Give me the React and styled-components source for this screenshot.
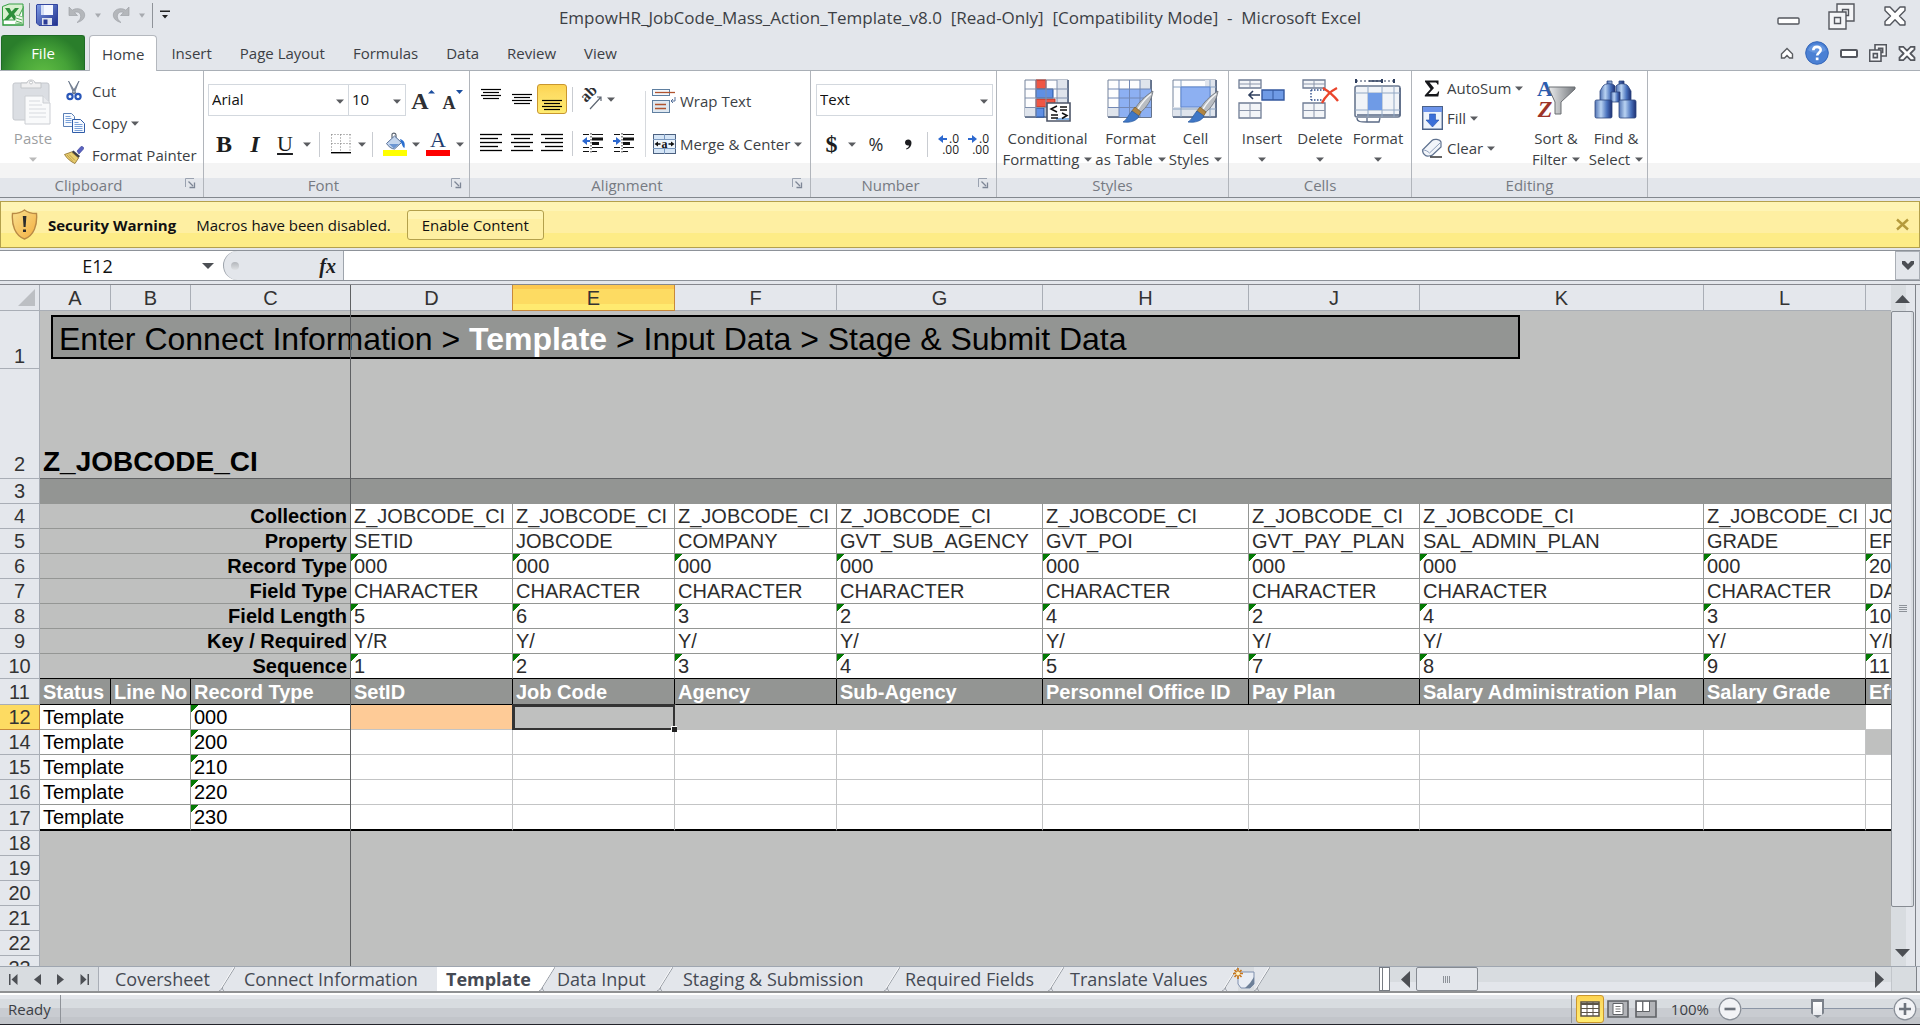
import React from "react";
import styled, { createGlobalStyle, css } from "styled-components";

const UI = '"Open Sans", "Noto Sans", sans-serif';
const SHEET = '"Liberation Sans", Arial, sans-serif';

const Global = createGlobalStyle`
  *, *::before, *::after { box-sizing: border-box; }
  body { margin: 0; background: #e3e6eb; }
  button, input, select { font: inherit; color: inherit; margin: 0; padding: 0; border: 0; background: none; border-radius: 0; }
  svg { display: block; flex: none; }
`;

/* ---------- window shell ---------- */
const Window = styled.div`
  display: flex;
  flex-direction: column;
  height: 100vh;
  overflow: hidden;
  background: #e3e6eb;
  color: #3c3f45;
  font: 15px/20px ${UI};
`;
const TitleBar = styled.header`
  display: grid;
  grid-template-columns: 1fr auto 1fr;
  height: 35px;
`;
const Title = styled.h1`
  margin: 0;
  align-self: center;
  font: 400 17px/30px ${UI};
  white-space: pre;
`;
const QuickAccess = styled.div`
  display: flex;
  align-items: center;
  height: 30px;
`;
const WindowButtons = styled.div`
  display: flex;
  justify-content: flex-end;
  align-items: center;
  height: ${(p) => p.$h || 32}px;
  gap: ${(p) => p.$gap}px;
  padding-right: ${(p) => p.$pad}px;
`;
const IconButton = styled.button`
  display: flex;
  align-items: center;
  justify-content: center;
  flex: none;
  width: ${(p) => (p.$w ? `${p.$w}px` : "auto")};
  height: ${(p) => (p.$h ? `${p.$h}px` : "auto")};
`;
const Divider = styled.span`
  flex: none;
  width: 1px;
  height: ${(p) => p.$h || 25}px;
  margin: 0 ${(p) => p.$m || 0}px;
  background: ${(p) => p.$color || "#c9ccd1"};
`;

/* ---------- ribbon ---------- */
const TabStrip = styled.nav`
  display: flex;
  align-items: stretch;
  height: 36px;
  border-bottom: 1px solid #a9afb6;
`;
const FileTab = styled.button`
  width: 84px;
  margin: 0 4px 0 1px;
  border: 1px solid #1f6b26;
  border-bottom: 0;
  border-radius: 3px 3px 0 0;
  background: radial-gradient(ellipse at 50% 125%, #63bf45 0, #46a338 45%, #2a7e2b 75%);
  color: #fff;
`;
const RibbonTab = styled.button`
  padding: 0 14px;
  ${(p) =>
    p.$active &&
    css`
      margin-bottom: -1px;
      padding: 0 12px;
      border: 1px solid #b4b8be;
      border-bottom: 0;
      border-radius: 4px 4px 0 0;
      background: #fff;
    `}
`;
const Spacer = styled.div`
  flex: 1;
`;
const Ribbon = styled.div`
  display: flex;
  height: 127px;
  border-bottom: 1px solid #83888e;
  background: linear-gradient(#fff 0 92px, #f4f4f4 92px 107px, #e3e6eb 107px);
`;
const Group = styled.section`
  position: relative;
  display: flex;
  flex-direction: column;
  flex: none;
  width: ${(p) => p.$w}px;
  border-right: 1px solid #b1b5bb;
`;
const GroupBody = styled.div`
  display: flex;
  height: 106px;
  padding: ${(p) => p.$pad || "0"};
`;
const GroupLabel = styled.h2`
  display: flex;
  align-items: center;
  justify-content: center;
  margin: 0;
  height: 17px;
  padding-right: ${(p) => (p.$launcher ? 26 : 0)}px;
  font: 400 15px/17px ${UI};
  color: #767a82;
`;
const Launcher = styled.button`
  position: absolute;
  right: 7px;
  bottom: 8px;
`;
const Stack = styled.div`
  display: flex;
  flex-direction: column;
  gap: ${(p) => p.$gap || 0}px;
  padding-top: ${(p) => p.$top || 0}px;
`;
const ToolRow = styled.div`
  display: flex;
  align-items: center;
  height: ${(p) => p.$h || 32}px;
`;
const BigButton = styled.button`
  display: flex;
  flex-direction: column;
  align-items: center;
  flex: none;
  width: ${(p) => p.$w}px;
  padding-top: 8px;
  line-height: 21px;
  white-space: nowrap;
  opacity: ${(p) => (p.$off ? 0.5 : 1)};
`;
const BigIcon = styled.span`
  height: 49px;
  flex: none;
`;
const LabelLine = styled.span`
  display: flex;
  align-items: center;
  justify-content: center;
  height: 21px;
  gap: 5px;
`;
const SmallButton = styled.button`
  display: flex;
  align-items: center;
  gap: 4px;
  height: ${(p) => p.$h || 32}px;
  white-space: nowrap;
`;
const IconSlot = styled.span`
  display: flex;
  justify-content: center;
  flex: none;
  width: ${(p) => p.$w || 21}px;
`;
const Toggle = styled(IconButton)`
  border: 1px solid #c9962f;
  border-radius: 3px;
  background: linear-gradient(#fcd34f, #fddc63 30%, #ffec70);
`;
const Combo = styled.span`
  position: relative;
  display: flex;
  align-items: center;
  width: ${(p) => p.$w}px;
  height: 32px;
  border: 1px solid #d3d8de;
  background: #fff;
  color: #111;
  & + & { margin-left: -1px; }
  & > svg { position: absolute; right: 4px; top: 14px; pointer-events: none; }
`;
const ComboSelect = styled.select`
  appearance: none;
  width: 100%;
  height: 30px;
  padding: 0 18px 3px 3px;
`;
const Glyph = styled.span`
  font: ${(p) => p.$style || "normal"} ${(p) => p.$weight || 700} ${(p) => p.$size || 22}px/28px "Liberation Serif", serif;
  color: #1c1d20;
  text-decoration: ${(p) => (p.$under ? "underline" : "none")};
`;
const Percent = styled.span`
  font: 400 18px/28px ${UI};
  color: #2a2c30;
`;

/* ---------- security bar ---------- */
const SecurityBar = styled.div`
  display: flex;
  align-items: center;
  height: 47px;
  margin-top: 3px;
  padding: 0 10px;
  border: 1px solid #b3a04c;
  background: linear-gradient(#fef4b4 0 9px, #feefa2 9px 31px, #fdec86 31px);
  color: #111;
`;
const Warn = styled.strong`
  margin: 0 20px 0 10px;
`;
const EnableButton = styled.button`
  height: 30px;
  width: 137px;
  margin-left: 16px;
  border: 1px solid #b3a04c;
  border-radius: 3px;
  background: linear-gradient(#fef4b4 0 8px, #feefa2 8px);
`;

/* ---------- formula bar ---------- */
const FormulaBar = styled.div`
  display: flex;
  height: 31px;
  margin-top: 2px;
  border: solid #8d9299;
  border-width: 1px 0;
  background: #fff;
`;
const NameBox = styled.input`
  width: 195px;
  text-align: center;
  font-size: 18px;
  color: #111;
`;
const FxArea = styled.div`
  display: flex;
  align-items: center;
  justify-content: space-between;
  width: 121px;
  margin-left: 3px;
  padding: 0 7px;
  border: solid #9ea4ac;
  border-width: 0 1px 0 1px;
  border-radius: 15px 0 0 15px;
  background: #e3e6eb;
`;
const Dot = styled.span`
  width: 8px;
  height: 8px;
  border-radius: 50%;
  background: linear-gradient(#b3b6bb, #dfe1e4);
`;
const FormulaInput = styled.input`
  flex: 1;
  min-width: 0;
  background: #fff;
`;
const ExpandButton = styled(IconButton)`
  border: 1px solid #a9aeb5;
  background: #e3e6eb;
`;

/* ---------- sheet ---------- */
const Main = styled.main`
  display: flex;
  flex: 1;
  min-height: 0;
  margin-top: 3px;
  border-top: 1px solid #85878d;
`;
const Viewport = styled.div`
  position: relative;
  flex: 1;
  min-width: 0;
  overflow: hidden;
  background: #bfc0bf;
`;
const Grid = styled.table`
  table-layout: fixed;
  width: 2028px;
  border-collapse: separate;
  border-spacing: 0;
  font: 20px/24px ${SHEET};
  color: #2d2d2d;
`;
const headFace = css`
  background: #e4e7ec;
  border: solid #a9aeb6;
  border-width: 0 1px 1px 0;
  font-weight: 400;
  padding: 0;
  color: #333;
`;
const hotFace = css`
  border-color: #c8893a;
  box-shadow: -1px 0 0 #c8893a;
`;
const ColHead = styled.th`
  ${headFace}
  height: 26px;
  ${(p) =>
    p.$hot &&
    css`
      ${hotFace}
      background: linear-gradient(#fcc850 0 4px, #fddb62 4px 19px, #ffea70 19px);
    `}
`;
const Corner = styled.th`
  ${headFace}
  & > svg { margin: 0 4px 0 auto; }
`;
const RowHead = styled.th`
  ${headFace}
  height: ${(p) => p.$h || 25}px;
  padding-bottom: ${(p) => p.$lift || 0}px;
  vertical-align: bottom;
  ${(p) => p.$hot && css`background: #fddb62; border-color: #c8893a;`}
`;
const Cell = styled.td`
  position: relative;
  padding: 0 3px;
  overflow: hidden;
  white-space: nowrap;
  text-align: left;
  vertical-align: bottom;
  background-color: ${(p) => p.$bg || "#fff"};
  border: 0 solid ${(p) => p.$line || "#949694"};
  border-right-width: ${(p) => (p.$noRight ? 0 : 1)}px;
  border-bottom-width: ${(p) => (p.$noBottom ? 0 : 1)}px;
  ${(p) =>
    p.$flag && css`background-image: linear-gradient(135deg, #047a04 0 5px, transparent 5px);`}
  ${(p) => p.$blackBottom && css`border-bottom-color: #000;`}
  ${(p) => p.$thick && css`border-bottom: 2px solid #000;`}
`;
const LabelCell = styled(Cell)`
  text-align: right;
  font-weight: 700;
  color: #000;
`;
const HeadingCell = styled(Cell)`
  font-weight: 700;
  color: #fff;
`;
const DarkCell = styled(Cell)`
  color: #000;
`;
const NameCell = styled(Cell)`
  font-size: 28px;
  line-height: 32px;
  font-weight: 700;
  color: #000;
`;
const SelectedCell = styled(Cell)`
  overflow: visible;
  outline: 3px solid #333;
  outline-offset: -2px;
  &::after {
    content: "";
    position: absolute;
    z-index: 1;
    right: -3px;
    bottom: -3px;
    width: 6px;
    height: 6px;
    border: solid #fff;
    border-width: 1px 0 0 1px;
    background: #222;
  }
`;
const Banner = styled.div`
  position: absolute;
  left: 51px;
  top: 30px;
  width: 1469px;
  height: 44px;
  padding-left: 6px;
  border: 2px solid #000;
  background: #939593;
  font: 32px/44px ${SHEET};
  color: #000;
  white-space: nowrap;
  & b { color: #fff; }
`;
const FreezeLine = styled.div`
  position: absolute;
  left: 350px;
  top: 0;
  bottom: 0;
  width: 1px;
  background: #5f6163;
`;
const VScroll = styled.div`
  display: flex;
  flex-direction: column;
  width: 29px;
  padding-right: 4px;
  border-right: 2px solid #e3e6eb;
  background: linear-gradient(90deg, #d8dce0 0 15px, #e3e6eb 15px 24px, #7f8389 24px 25px, #e3e6eb 25px);
`;
const VThumb = styled.div`
  flex: 1;
  display: flex;
  align-items: center;
  justify-content: center;
  margin-bottom: 33px;
  border: 1px solid #868b92;
  border-radius: 2px;
  background: linear-gradient(90deg, #e3e6eb 0 19px, #d8dce0 19px);
`;

/* ---------- bottom strips ---------- */
const SheetBar = styled.div`
  display: flex;
  align-items: stretch;
  height: 27px;
  border-top: 1px solid #9fa6b0;
  border-bottom: 2px solid #8f9193;
  background: #d8dce0;
  font-size: 18px;
  line-height: 22px;
  color: #454a54;
`;
const NavButtons = styled.div`
  display: flex;
  align-items: center;
  width: 99px;
  padding-left: 2px;
  border-right: 1px solid #a9aeb6;
`;
const SheetTab = styled.button`
  flex: none;
  width: ${(p) => p.$w}px;
  background: ${(p) => (p.$active ? "#fff" : "#e3e6eb")};
  font-weight: ${(p) => (p.$active ? 700 : 400)};
  white-space: nowrap;
  text-align: left;
  padding-left: ${(p) => p.$pl}px;
`;
const NewSheetTab = styled.button`
  position: relative;
  z-index: 1;
  display: flex;
  flex: none;
  align-items: center;
  justify-content: center;
  width: 22px;
  margin: 0 -1px 0 -5px;
`;
const HScroll = styled.div`
  display: flex;
  align-items: center;
  flex: none;
  width: 512px;
  background: linear-gradient(#d8dce0 0 15px, #e3e6eb 15px);
`;
const HThumb = styled.div`
  display: flex;
  align-items: center;
  justify-content: center;
  width: 62px;
  height: 24px;
  margin-right: auto;
  border: 1px solid #868b92;
  border-radius: 2px;
  background: #e3e6eb;
`;
const SplitHandle = styled.div`
  width: 11px;
  height: 24px;
  margin-right: 4px;
  border: 1px solid #777c83;
  background: linear-gradient(90deg, #fff 0 2px, #777c83 2px 3px, #fff 3px);
`;
const ScrollCorner = styled.div`
  width: 29px;
  border-left: 1px solid #c2c6cb;
  background: linear-gradient(90deg, #d8dce0 0 24px, #7f8389 24px 25px, #e3e6eb 25px);
`;
const StatusBar = styled.footer`
  display: flex;
  align-items: center;
  height: 32px;
  padding: 0 3px 2px 8px;
  border-top: 2px solid #fff;
  border-bottom: 1px solid #23242a;
  background: linear-gradient(#e3e6eb 0 4px, #d8dce0 4px 13px, #c9ccd1 13px 22px, #c2c5ca 22px);
`;
const ZoomLabel = styled.label`
  margin: 0 9px 0 8px;
`;
const ZoomRange = styled.input`
  appearance: none;
  width: 151px;
  height: 20px;
  background: linear-gradient(#8b95a5, #8b95a5) center / 100% 1px no-repeat;
  &::-webkit-slider-thumb {
    appearance: none;
    width: 13px;
    height: 19px;
    background: linear-gradient(#fff, #e8eaee) center / 9px 13px no-repeat #7c828b;
    clip-path: polygon(0 0, 100% 0, 100% 75%, 50% 100%, 0 75%);
  }
`;
const ViewToggle = styled(Toggle)`
  margin-right: 3px;
`;

/* ---------- icons ---------- */
const Caret = ({ c = "#5a5c60", w = 8 }) => (
  <svg width={w} height="5" viewBox="0 0 8 5" preserveAspectRatio="none"><path d="M0 0.5h8L4 4.8z" fill={c} /></svg>
);
const ExcelIcon = () => (
  <svg width="24" height="24" viewBox="0 0 24 24">
    <path d="M4 4h18v18H2V6z" fill="#fff" stroke="#2c9a3c" strokeWidth="1.4" />
    <path d="M1.5 3.5 8 1h14v4l-6 12H1.5z" fill="#d9f0d0" stroke="#38a046" />
    <path d="M4 5h4.500l2 3.500L14 5h4l-5 6 4.500 6H13l-2.500-3.500L7 17H3l5-6z" fill="#2d8f3a" />
    <path d="M15 12l7 2v7l-8-1" fill="#eef7ea" stroke="#7bc07f" />
    <path d="M15 15l6 2M15 18l6 2" stroke="#57ad5d" />
  </svg>
);
const SaveIcon = () => (
  <svg width="22" height="22" viewBox="0 0 22 22">
    <defs><linearGradient id="sv" x1="0" y1="0" x2="1" y2="1"><stop offset="0" stopColor="#7f9de6" /><stop offset="1" stopColor="#1f2f8c" /></linearGradient></defs>
    <path d="M1 .5h20.500v21H3L.5 19V1z" fill="url(#sv)" stroke="#3346a0" />
    <path d="M5 1h12v10H5z" fill="#f3f6ff" /><path d="M5 1h3v10H5z" fill="#d2dcf5" />
    <path d="M6 14h10v7H6z" fill="#dfe3ee" /><path d="M7.500 15.500h4v5h-4z" fill="#2a3a96" />
  </svg>
);
const Undo = ({ flip }) => (
  <svg width="18" height="18" viewBox="0 0 18 18">
    <g transform={flip ? "translate(18 0) scale(-1 1)" : undefined}>
      <path d="M1 1v8.500h8.500L6.500 6.600c3-1.600 6.200.2 6.200 3.700 0 2.400-1.200 4.300-3.700 6.200 4.800-1.200 7.700-3.900 7.700-7.500C16.700 3.600 9.500.7 4.200 4.200z" fill="#b4b7bb" stroke="#9fa2a7" strokeWidth=".7" />
    </g>
  </svg>
);
const QatMore = () => (
  <svg width="10" height="10" viewBox="0 0 10 10"><path d="M0 .5h10v1.500H0zM2 5h6L5 8.500z" fill="#222" /></svg>
);
const MinIcon = ({ w = 22, h = 7, s = 1.4 }) => (
  <svg width={w} height={h + 12} viewBox={`0 0 ${w} ${h + 12}`}><rect x="1" y="11" width={w - 2} height={h - 1} rx="1" fill="#fff" stroke="#54575e" strokeWidth={s} /></svg>
);
const SmallMinIcon = () => (
  <svg width="18" height="9" viewBox="0 0 18 9"><rect x="1" y="1" width="16" height="7" rx="1" fill="#fff" stroke="#54575e" strokeWidth="2" /></svg>
);
const RestoreIcon = ({ size = 27, s = 1.4 }) => (
  <svg width={size} height={size} viewBox="0 0 27 27">
    <g fill="#f4f5f7" stroke="#54575e" strokeWidth={s}>
      <path d="M9 1h17v17H9z" /><path d="M14.500 6.500h6v6h-6z" /><path d="M1 9h17v17H1z" /><path d="M6.500 14.500h6v6h-6z" />
    </g>
  </svg>
);
const CloseIcon = ({ w = 24, s = 1.4 }) => (
  <svg width={w} height={Math.round((w * 20) / 24)} viewBox="0 0 24 20">
    <path d="M2 1h5l5 5.200L17 1h5v3.500L16.500 10l5.500 5.500V19h-5l-5-5.200L7 19H2v-3.500L7.500 10 2 4.500z" fill="#fff" stroke="#54575e" strokeWidth={s} strokeLinejoin="round" />
  </svg>
);
const RibbonChevron = () => (
  <svg width="14" height="13" viewBox="0 0 14 13"><path d="M1.500 7 7 1.500 12.500 7v4h-3L7 8.500 4.500 11h-3z" fill="#fff" stroke="#5a5c60" strokeWidth="1.400" /></svg>
);
const HelpIcon = () => (
  <svg width="24" height="24" viewBox="0 0 24 24">
    <circle cx="12" cy="12" r="11.300" fill="#4a80d4" stroke="#3365b8" />
    <path d="M3 9a9.500 8 0 0 1 18 0c-5 4-13 4-18 0z" fill="#76a3e6" opacity=".6" />
    <path d="M8.300 9.200C8.300 4.800 15.700 4.800 15.700 9c0 2.600-3.500 2.800-3.500 5.600" fill="none" stroke="#fff" strokeWidth="2.600" /><path d="M10.800 16.500h2.700v2.700h-2.700z" fill="#fff" />
  </svg>
);
const LauncherIcon = () => (
  <svg width="11" height="11" viewBox="0 0 11 11"><path d="M.5 9V.5H9" fill="none" stroke="#9aa2b0" /><path d="M3.500 3.500 8 8M9.500 4.500v5h-5" fill="none" stroke="#7d8696" strokeWidth="1.300" /></svg>
);
const PasteIcon = () => (
  <svg width="42" height="46" viewBox="0 0 42 46">
    <rect x="1" y="4" width="36" height="37" rx="2" fill="#b9bfc8" stroke="#8b929c" />
    <path d="M9 9V4h6c0-4 8-4 8 0h6v5z" fill="#e2e3e5" stroke="#888d94" /><circle cx="19" cy="3.500" r="1.500" fill="#fff" stroke="#888d94" />
    <path d="M13 17h18l7 7v21H13z" fill="#f4f6f9" stroke="#9aa0a9" /><path d="M31 17v7h7" fill="#d5d9df" stroke="#9aa0a9" />
    <path d="M17 22h11M17 26h13M17 30h17M17 34h17M17 38h17" stroke="#b2b8c1" />
  </svg>
);
const CutIcon = () => (
  <svg width="16" height="20" viewBox="0 0 16 20">
    <path d="M2.500 0 10 12l-2 1zM13 0 6 12l2 1z" fill="#8d97a8" stroke="#4c5a72" strokeWidth=".6" />
    <circle cx="4" cy="15.500" r="2.600" fill="none" stroke="#2a57b8" strokeWidth="2.200" /><circle cx="12" cy="15.500" r="2.600" fill="none" stroke="#2a57b8" strokeWidth="2.200" />
  </svg>
);
const CopyIcon = () => (
  <svg width="22" height="20" viewBox="0 0 22 20">
    <g fill="#f7faff" stroke="#5b7fb5"><path d="M.5.500h8l3 3v10H.5z" /><path d="M9.500 6.500h8l4 4v9h-12z" stroke="#2f5ca8" /></g>
    <path d="M2.500 3.500h5M2.500 5.500h6M2.500 7.500h6M2.500 9.500h6M11.500 9.500h4M11.500 11.500h8M11.500 13.500h8M11.500 15.500h8M11.500 17.500h8" stroke="#6a95d4" strokeWidth=".9" />
  </svg>
);
const BrushIcon = () => (
  <svg width="20" height="18" viewBox="0 0 20 18">
    <path d="M13 5 17 .5c2-.5 3 1 2.500 2.500L15 8z" fill="#5a62c0" stroke="#3c4397" strokeWidth=".6" />
    <path d="M9.500 4.500 16 10l-1.500 2L7.500 6z" fill="#3f4046" />
    <path d="M7.500 6 14.500 12 11 17.500C7 16 3 12.500.5 8.500z" fill="#e9cf72" stroke="#8a6a23" strokeWidth=".8" /><path d="M3 9l6 6.500M5 8.500l6 6" stroke="#b8933a" strokeWidth=".8" />
  </svg>
);
const BordersIcon = () => (
  <svg width="20" height="20" viewBox="0 0 20 20">
    <path d="M.5.500h19M.5 9.500h19M.5 .5v17M9.500.500v17M19 .5v17" stroke="#777" strokeDasharray="1 2" fill="none" /><path d="M0 18.700h20" stroke="#000" strokeWidth="1.400" />
  </svg>
);
const FillIcon = () => (
  <svg width="24" height="24" viewBox="0 0 24 24">
    <path d="M9 6V2.500C9 .5 13 .5 13 3v4" fill="none" stroke="#5b6470" strokeWidth="1.200" />
    <path d="M3.500 11.500 11.500 4l7 6.500-7 6.500c-3 0-6-2.500-8-5.500z" fill="#c3d5ee" stroke="#566f96" />
    <path d="M6 12h10l-5 4.500z" fill="#6b95d2" /><path d="M17 7c4 1 5.500 4 4.500 9-2-.5-2-3-3.500-5.500z" fill="#2a6fd0" />
    <path d="M0 18h24v6H0z" fill="#ff0" />
  </svg>
);
const FontColorIcon = () => (
  <svg width="24" height="24" viewBox="0 0 24 24">
    <text x="12" y="15" textAnchor="middle" fontFamily="Liberation Serif, serif" fontSize="22" fill="#1f3d70">A</text><path d="M0 18h24v6H0z" fill="#fe0000" />
  </svg>
);
const FontSizeIcon = ({ up }) => (
  <svg width="24" height="24" viewBox="0 0 24 24">
    <text x="9" y="21" textAnchor="middle" fontFamily="Liberation Serif, serif" fontWeight="700" fontSize={up ? 24 : 18} fill="#2e3034">A</text>
    <path d={up ? "M17 5.500h7L20.500 2z" : "M16 2h7l-3.500 4z"} fill="#1c4fa0" />
  </svg>
);
const Lines = ({ rows }) => (
  <svg width="22" height="20" viewBox="0 0 22 20">
    {rows.map(([x, w], i) => (<path key={i} d={`M${x} ${i * 4 + 1.5}h${w}`} stroke="#000" strokeWidth="1.300" />))}
  </svg>
);
const VLines = ({ top }) => (
  <svg width="20" height="26" viewBox="0 0 20 26">
    {[[0, 20], [2, 16], [0, 20], [2, 16]].map(([x, w], i) => (<path key={i} d={`M${x} ${top + i * 3 + 0.5}h${w}`} stroke="#000" strokeWidth="1.200" />))}
  </svg>
);
const full = [0, 22];
const OrientIcon = () => (
  <svg width="22" height="22" viewBox="0 0 22 22">
    <text x="0" y="0" transform="translate(5 15) rotate(-45)" fontFamily="Liberation Serif, serif" fontWeight="700" fontSize="16" fill="#2e3034">ab</text>
    <path d="M9 21 20 9M16 9h4v4" fill="none" stroke="#5f6773" strokeWidth="1.200" />
  </svg>
);
const IndentIcon = ({ flip }) => (
  <svg width="22" height="20" viewBox="0 0 22 20">
    <path d="M1 1.500h6M10 1.500h11M1 14.500h6M10 14.500h11M1 18.500h6M10 18.500h5" stroke="#111" strokeWidth="1.200" />
    <path d="M9 0v20" stroke="#222" strokeDasharray="1.500 1.500" /><path d="M10 4.500h11v3H10zM10 9h7v3h-7z" fill="#111" />
    <path d={flip ? "M0 7h3V4l5 4-5 4V9H0z" : "M8 7H5V4L0 8l5 4V9h3z"} fill="#2c68cf" />
  </svg>
);
const WrapIcon = () => (
  <svg width="24" height="24" viewBox="0 0 24 24">
    <rect x=".5" y=".5" width="17" height="6" fill="#f4f8fc" stroke="#5f7fa0" /><path d="M3 3.500h20" stroke="#b0532e" strokeWidth="1.300" />
    <rect x=".5" y="11.500" width="17" height="12" fill="#dfe8f1" stroke="#5f7fa0" /><path d="M3 15.500h11M3 19.500h11" stroke="#b0532e" strokeWidth="1.300" />
    <path d="M23 8v4h-4M21 10l-2 2 2 2" fill="none" stroke="#54709a" />
  </svg>
);
const MergeIcon = () => (
  <svg width="23" height="20" viewBox="0 0 23 20">
    <rect x=".5" y=".5" width="22" height="19" fill="#d5e5f6" stroke="#4c6180" /><path d="M0 5.500h23M0 14.500h23M11.500 0v5M11.500 15v5" stroke="#7a98bf" />
    <path d="M1 6h21v8H1z" fill="#eef5fc" /><path d="M1.500 10 5 7.500V9.300h2.500v1.400H5v1.800zM21.500 10 18 7.500v1.800h-2.500v1.400H18v1.800z" fill="#111" />
    <text x="11.500" y="13.500" textAnchor="middle" fontFamily="Liberation Serif, serif" fontWeight="700" fontSize="12" fill="#111">a</text>
  </svg>
);
const CommaIcon = () => (
  <svg width="9" height="11" viewBox="0 0 9 11"><path d="M1 3.500C1 1.500 2.500.500 4.200.500 6.300.500 7.500 2 7.500 4c0 3-1.800 5.300-5 6.500l-.4-.9C4 8.700 4.900 7.700 5 6.400 3 7 1 5.800 1 3.500z" fill="#1c1d20" /></svg>
);
const DecimalIcon = ({ right }) => (
  <svg width="22" height="22" viewBox="0 0 22 22">
    <path d={right ? "M0 5h4V2l5 4-5 4V7H0z" : "M9 5H5V2L0 6l5 4V7h4z"} fill="#2c68cf" />
    <text x="21" y="10" textAnchor="end" fontFamily="Open Sans, sans-serif" fontSize="12" fill="#222">.0</text>
    <text x="21" y="21" textAnchor="end" fontFamily="Open Sans, sans-serif" fontSize="12" fill="#222">.00</text>
  </svg>
);
const Brush = () => (
  <g>
    <path d="M46 12c-8 5-15 12-18 18l5 4c6-5 12-13 13-22z" fill="#b9bdc2" stroke="#6b7076" strokeWidth=".8" /><path d="M44 15c-5 4-10 10-13 15" stroke="#f4f5f6" strokeWidth="1.500" fill="none" />
    <path d="M28 28l6 5-3 5-7-5z" fill="#b08543" stroke="#7a5a24" strokeWidth=".7" /><path d="M25 32l7 5c-2 5-9 7-16 6 4-2 5-7 9-11z" fill="#3f77c6" stroke="#2a5a9f" strokeWidth=".7" />
  </g>
);
const GridBase = () => (
  <g><path d="M1 1h43v37H1z" fill="#fdfdfe" stroke="#75839b" /><path d="M33 1h11v37H1V28h32z" fill="#dfe4ec" /><path d="M1 38h43V1" fill="none" stroke="#4f5f7c" strokeWidth="1.600" /></g>
);
const CondIcon = () => (
  <svg width="48" height="44" viewBox="0 0 48 44">
    <GridBase /><path d="M12 1h10v9H12zM12 20h19v8H12z" fill="#ef5644" stroke="#b53323" /><path d="M12 10h17v9H12zM12 29h8v9h-8z" fill="#5f8fe4" stroke="#23509c" />
    <path d="M1 10h43M1 19h43M1 28.500h43M12 1v37M22 1v37M33 1v37" stroke="#8090ad" fill="none" />
    <path d="M23 24h23v18H23z" fill="#fff" stroke="#4d5668" strokeWidth="1.600" /><path d="M32 39h13v2H32z" fill="#87b5e8" />
    <path d="M33 27l-6 3 6 3M27 36h7M27 39h7M36 28h7M36 31h7M38 34l5 2.500-5 3" fill="none" stroke="#111" strokeWidth="1.500" />
  </svg>
);
const TableIcon = () => (
  <svg width="48" height="44" viewBox="0 0 48 44">
    <GridBase /><path d="M12 10h32v28H12z" fill="#8db0f2" /><path d="M1 10h43M1 19h43M1 28.500h43M12 1v37M22.500 1v37M33 1v37" stroke="#7388b4" fill="none" /><Brush />
  </svg>
);
const CellStyleIcon = () => (
  <svg width="48" height="44" viewBox="0 0 48 44">
    <GridBase /><path d="M1 8h43M1 30h43M9 1v37M38 1v37" stroke="#8aa3c2" fill="none" /><path d="M9 8h29v20H9z" fill="#8db0f2" stroke="#5f86cf" /><Brush />
  </svg>
);
const MiniGrid = ({ y, h }) => (
  <g><path d={`M1 ${y}h22v${h}H1z`} fill="#f3f5f8" stroke="#6f7c94" strokeWidth="1.300" /><path d={`M12 ${y}v${h}M1 ${y + h / 2}h22`} stroke="#8a95aa" /></g>
);
const InsertIcon = () => (
  <svg width="48" height="44" viewBox="0 0 48 44">
    <MiniGrid y={1} h={8} /><MiniGrid y={24} h={15} /><path d="M24 11h22v10H24z" fill="#6f9be6" stroke="#34589f" strokeWidth="1.400" /><path d="M35 11v10" stroke="#34589f" />
    <path d="M22 16H11M15 12l-4 4 4 4" fill="none" stroke="#2f3f5e" strokeWidth="1.600" />
  </svg>
);
const DeleteIcon = () => (
  <svg width="48" height="44" viewBox="0 0 48 44">
    <g transform="translate(6 0)"><MiniGrid y={1} h={8} /><MiniGrid y={24} h={15} /><path d="M9 11h14M9 21h14M9 11v10" fill="none" stroke="#2f4d8c" strokeWidth="1.400" strokeDasharray="1.500 1.500" />
      <path d="M21 9c5 3 11 8 15 13M35 9c-6 3-12 9-15 15" fill="none" stroke="#ea452c" strokeWidth="2.400" /></g>
  </svg>
);
const FormatIcon = () => (
  <svg width="48" height="46" viewBox="0 0 48 46">
    <path d="M2 0v4M40 0v4M28 0v4" stroke="#2f3f5e" strokeWidth="2" /><path d="M2 2h38" stroke="#2f3f5e" strokeDasharray="2 2" /><path d="M15 2h12" stroke="#2f3f5e" strokeWidth="1.500" />
    <rect x="1" y="7" width="45" height="31" rx="2" fill="#f1f4f8" stroke="#6a7890" strokeWidth="1.600" /><path d="M3 36h43V9" fill="none" stroke="#5a6a85" strokeWidth="1.500" />
    <path d="M1 14h45M1 31h45M14 7v31M28 7v31M40 7v31" stroke="#92a8c4" /><path d="M14 14h14v17H14z" fill="#6f9be6" />
    <path d="M3 39c0 4 4 4 10 4M13 39v4h12l1-4" fill="none" stroke="#5a6a85" strokeWidth="1.300" />
  </svg>
);
const SigmaIcon = () => (
  <svg width="16" height="17" viewBox="0 0 16 17"><path d="M1 .5h13.500v4h-1.200c-.3-1.500-.8-2-2.300-2H5.500l4.500 5.500-5.500 6h7c1.500 0 2-.7 2.500-2.500h1.200l-.9 5H.8v-1.200L6.500 9 1 1.700z" fill="#15161a" /></svg>
);
const FillDownIcon = () => (
  <svg width="21" height="24" viewBox="0 0 21 24">
    <path d="M.7.700h19.600v22.600H.7z" fill="#eef4fc" stroke="#4b6288" strokeWidth="1.400" /><path d="M1 1h19v5H1z" fill="#6d94ea" />
    <path d="M7.500 8h6v6h3.500l-6.500 7-6.500-7h3.500z" fill="#3a6fd8" stroke="#2753a8" strokeWidth=".6" />
  </svg>
);
const EraserIcon = () => (
  <svg width="22" height="20" viewBox="0 0 22 20">
    <path d="M1.500 12 11 2.500c2-2 8-1.500 9 1.500v5L11.500 17c-1 1-6 1.500-7 .5-1.500-1-3-3-3-5.500z" fill="#f2f5fa" stroke="#5f728f" strokeWidth="1.200" /><path d="M1.500 12c3 0 5 1 7 3L19 5" fill="none" stroke="#8fa0bb" /><path d="M9 19h12" stroke="#111" strokeWidth="1.300" />
  </svg>
);
const SortIcon = () => (
  <svg width="40" height="42" viewBox="0 0 40 42">
    <defs><linearGradient id="fn"><stop offset="0" stopColor="#e9eaeb" /><stop offset="1" stopColor="#75797e" /></linearGradient></defs>
    <text x="9" y="17" textAnchor="middle" fontFamily="Liberation Serif, serif" fontWeight="700" fontSize="22" fill="#2b5cae">A</text>
    <text x="9" y="38" textAnchor="middle" fontFamily="Liberation Serif, serif" fontStyle="italic" fontWeight="700" fontSize="24" fill="#9c3328">Z</text>
    <path d="M13 8h26v2L25 23v12h-6V23L13 10z" fill="url(#fn)" stroke="#6b6e73" />
  </svg>
);
const FindIcon = () => (
  <svg width="44" height="42" viewBox="0 0 44 42">
    <defs><linearGradient id="bn"><stop offset="0" stopColor="#5173b4" /><stop offset=".35" stopColor="#b9d3f2" /><stop offset=".7" stopColor="#4a72bd" /><stop offset="1" stopColor="#1d2f72" /></linearGradient></defs>
    <g fill="url(#bn)" stroke="#2e477f" strokeWidth=".8">
      <path d="M13 2h5v5h-5zM25 2h5v5h-5z" /><path d="M9 7c2-3 10-3 12 0v15H6V12z" /><path d="M22 7c2-3 10-3 12 0l3 5v10H22z" />
      <path d="M17 13h9v10h-9z" /><rect x="1" y="21" width="17" height="18" rx="1.500" /><rect x="25" y="21" width="17" height="18" rx="1.500" />
    </g>
  </svg>
);
const ShieldIcon = () => (
  <svg width="27" height="31" viewBox="0 0 27 31">
    <defs><linearGradient id="sh" x1="0" x2="1" y1="0" y2="1"><stop offset="0" stopColor="#f9e08e" /><stop offset="1" stopColor="#f3ae3f" /></linearGradient></defs>
    <path d="M13.500 1c3 2.500 8 3.500 12 3.500C26.500 16 23 26.500 13.500 30 4 26.500.5 16 1.500 4.500 5.500 4.500 10.500 3.500 13.500 1z" fill="url(#sh)" stroke="#b98a45" strokeWidth="1.400" />
    <path d="M11.800 7h3.600l-.8 11h-2zM12 20.500h3V23h-3z" fill="#2b2b2b" />
  </svg>
);
const SmallX = () => (
  <svg width="13" height="13" viewBox="0 0 13 13"><path d="M1 1.500l11 10M12 1.500l-11 10" stroke="#b59a3c" strokeWidth="2.400" /></svg>
);
const Tri = ({ d, w = 15, h = 9 }) => (
  <svg width={w} height={h} viewBox={`0 0 ${w} ${h}`}><path d={d} fill="#4c4f54" /></svg>
);
const CornerTri = () => (
  <svg width="17" height="17" viewBox="0 0 17 17"><path d="M17 0v17H0z" fill="#bcbfc3" /></svg>
);
const TabEdge = ({ left = "#e3e6eb", right = "#e3e6eb" }) => (
  <svg width="16" height="24" viewBox="0 0 16 24">
    <path d="M0 0h16v24H0z" fill={right} /><path d="M0 0h16L2.500 21 0 24z" fill={left} />
    <path d="M16 0 3.500 20c-1 2-2 4-3.500 4M3.500 20c-.3 2 .5 3 1.500 4" fill="none" stroke="#9398a0" /><path d="M15 0 2 21" stroke="#fff" strokeWidth=".8" />
  </svg>
);
const NewSheetIcon = () => (
  <svg width="22" height="22" viewBox="0 0 22 22">
    <path d="M5 4h16v12l-4 4H8l-3-4z" fill="#e9edf4" stroke="#7f8fae" /><path d="M21 9v7l-4 4h-5l5-5z" fill="#6d8098" />
    <path d="M5 0v11M0 5.500h10M1.500 2l7 7M8.500 2l-7 7" stroke="#c9781c" strokeWidth="1.700" /><circle cx="5" cy="5.500" r="2" fill="#fff3c4" />
  </svg>
);
const GridViewIcon = () => (
  <svg width="20" height="16" viewBox="0 0 20 16"><path d="M1 1h18v14H1z" fill="#fff" stroke="#5a5347" strokeWidth="1.500" /><path d="M1 3h18" stroke="#5a5347" strokeWidth="2" /><path d="M1 7.500h18M1 11.500h18M7 1v14M13 1v14" stroke="#5a5347" /></svg>
);
const PageViewIcon = () => (
  <svg width="22" height="18" viewBox="0 0 22 18"><path d="M1 1h20v16H1z" fill="#b2b4b8" stroke="#5f6266" strokeWidth="1.600" /><path d="M6 3.500h10v11H6z" fill="#fff" stroke="#5f6266" /><path d="M8.500 6.500h5M8.500 9h5M8.500 11.500h5" stroke="#777" /></svg>
);
const BreakViewIcon = () => (
  <svg width="22" height="18" viewBox="0 0 22 18"><path d="M1 1h20v16H1z" fill="#b2b4b8" stroke="#5f6266" strokeWidth="1.600" /><path d="M2 2h5v9H2zM8.500 2H14v9H8.500z" fill="#fff" /><path d="M7.700 1v10.500H1M14.500 1v10.500h-7" fill="none" stroke="#5f6266" /></svg>
);
const ZoomKnob = ({ plus }) => (
  <svg width="24" height="24" viewBox="0 0 24 24"><circle cx="12" cy="12" r="10.800" fill="#f2f3f6" stroke="#878d96" strokeWidth="1.200" /><path d={plus ? "M6 12h12M12 6v12" : "M6.500 12h11"} stroke="#6d737c" strokeWidth="2.600" /></svg>
);

/* ---------- data ---------- */
const COLS = [["A", 71], ["B", 80], ["C", 160], ["D", 162], ["E", 162], ["F", 162], ["G", 206], ["H", 206], ["J", 171], ["K", 284], ["L", 162], ["", 162]];
const CI = "Z_JOBCODE_CI";
const META = [
  [4, "Collection", [CI, CI, CI, CI, CI, CI, CI, CI, "JOBCODE_TBL"]],
  [5, "Property", ["SETID", "JOBCODE", "COMPANY", "GVT_SUB_AGENCY", "GVT_POI", "GVT_PAY_PLAN", "SAL_ADMIN_PLAN", "GRADE", "EFFDT"]],
  [6, "Record Type", ["000", "000", "000", "000", "000", "000", "000", "000", "200"], true],
  [7, "Field Type", [...Array(8).fill("CHARACTER"), "DATE"]],
  [8, "Field Length", ["5", "6", "3", "2", "4", "2", "4", "3", "10"], true],
  [9, "Key / Required", ["Y/R", "Y/", "Y/", "Y/", "Y/", "Y/", "Y/", "Y/", "Y/R"]],
  [10, "Sequence", ["1", "2", "3", "4", "5", "7", "8", "9", "11"], true],
];
const HEADINGS = ["Status", "Line No", "Record Type", "SetID", "Job Code", "Agency", "Sub-Agency", "Personnel Office ID", "Pay Plan", "Salary Administration Plan", "Salary Grade", "Effective Date"];
const TEMPLATE_ROWS = [[14, "200"], [15, "210"], [16, "220"], [17, "230"]];
const GRAY = "#bfc0bf";
const DARK = "#939593";
const LIGHT_LINE = "#c3c4c5";

function Sheet() {
  return (
    <Viewport>
      <Grid>
        <colgroup>
          <col style={{ width: 40 }} />
          {COLS.map(([c, w], i) => <col key={i} style={{ width: w }} />)}
        </colgroup>
        <thead>
          <tr>
            <Corner aria-label="Select all"><CornerTri /></Corner>
            {COLS.map(([c], i) => <ColHead key={i} $hot={c === "E"}>{c}</ColHead>)}
          </tr>
        </thead>
        <tbody>
          <tr><RowHead $h={58}>1</RowHead><Cell colSpan={12} $bg={GRAY} $noRight $noBottom /></tr>
          <tr><RowHead $h={110} $lift={2}>2</RowHead><NameCell colSpan={12} $bg={GRAY} $noRight $line="#5f6163">{CI}</NameCell></tr>
          <tr><RowHead>3</RowHead><Cell colSpan={12} $bg={DARK} $noRight $noBottom /></tr>
          {META.map(([n, label, vals, flag]) => (
            <tr key={n}>
              <RowHead>{n}</RowHead>
              <LabelCell colSpan={3} $bg={GRAY} $blackBottom={n === 10}>{label}</LabelCell>
              {vals.map((v, i) => <Cell key={i} $flag={flag} $blackBottom={n === 10}>{v}</Cell>)}
            </tr>
          ))}
          <tr>
            <RowHead $h={26}>11</RowHead>
            {HEADINGS.map((h) => <HeadingCell key={h} $bg={DARK} $line="#000">{h}</HeadingCell>)}
          </tr>
          <tr>
            <RowHead $hot>12</RowHead>
            <DarkCell colSpan={2}>Template</DarkCell>
            <DarkCell $flag>000</DarkCell>
            <Cell $bg="#fecb97" $line="#c3c4c5" />
            <SelectedCell $bg={GRAY} $line={GRAY} />
            {[0, 1, 2, 3, 4, 5].map((i) => <Cell key={i} $bg={GRAY} $line={GRAY} />)}
            <Cell $line={LIGHT_LINE} />
          </tr>
          {TEMPLATE_ROWS.map(([n, code]) => (
            <tr key={n}>
              <RowHead $h={n === 17 ? 26 : 25}>{n}</RowHead>
              <DarkCell colSpan={2} $thick={n === 17}>Template</DarkCell>
              <DarkCell $flag $thick={n === 17}>{code}</DarkCell>
              {Array.from({ length: 9 }, (_, i) => (
                <Cell key={i} $bg={n === 14 && i === 8 ? GRAY : undefined} $line={LIGHT_LINE} $thick={n === 17} />
              ))}
            </tr>
          ))}
          {[18, 19, 20, 21, 22, 23].map((n) => (
            <tr key={n}><RowHead>{n}</RowHead><Cell colSpan={12} $bg={GRAY} $noRight $noBottom /></tr>
          ))}
        </tbody>
      </Grid>
      <Banner>Enter Connect Information &gt; <b>Template</b> &gt; Input Data &gt; Stage &amp; Submit Data</Banner>
      <FreezeLine />
    </Viewport>
  );
}

function RibbonPanel() {
  return (
    <Ribbon>
      <Group $w={204}>
        <GroupBody $pad="0 0 0 6px">
          <BigButton $w={54} $off><BigIcon><PasteIcon /></BigIcon><LabelLine>Paste</LabelLine><LabelLine><Caret c="#777" /></LabelLine></BigButton>
          <Stack $top={4}>
            <SmallButton><IconSlot $w={28}><CutIcon /></IconSlot>Cut</SmallButton>
            <SmallButton><IconSlot $w={28}><CopyIcon /></IconSlot>Copy <Caret /></SmallButton>
            <SmallButton><IconSlot $w={28}><BrushIcon /></IconSlot>Format Painter</SmallButton>
          </Stack>
        </GroupBody>
        <GroupLabel $launcher>Clipboard</GroupLabel>
        <Launcher aria-label="Clipboard options"><LauncherIcon /></Launcher>
      </Group>

      <Group $w={266}>
        <GroupBody $pad="13px 0 0 4px">
          <Stack $gap={12}>
            <ToolRow>
              <Combo $w={141}><ComboSelect aria-label="Font"><option>Arial</option></ComboSelect><Caret /></Combo>
              <Combo $w={58}><ComboSelect aria-label="Font size"><option>10</option></ComboSelect><Caret /></Combo>
              <IconButton $w={34} aria-label="Grow font"><FontSizeIcon up /></IconButton>
              <IconButton $w={24} aria-label="Shrink font"><FontSizeIcon /></IconButton>
            </ToolRow>
            <ToolRow>
              <IconButton $w={32}><Glyph $size={24}>B</Glyph></IconButton>
              <IconButton $w={30}><Glyph $size={24} $style="italic">I</Glyph></IconButton>
              <IconButton $w={30}><Glyph $size={22} $weight={400} $under>U</Glyph></IconButton>
              <IconButton $w={14} aria-label="Underline styles"><Caret /></IconButton>
              <Divider $m={5} />
              <IconButton $w={32} aria-label="Borders"><BordersIcon /></IconButton>
              <IconButton $w={10} aria-label="Border styles"><Caret /></IconButton>
              <Divider $m={5} />
              <IconButton $w={34} aria-label="Fill color"><FillIcon /></IconButton>
              <IconButton $w={8} aria-label="Fill colors"><Caret /></IconButton>
              <IconButton $w={36} aria-label="Font color"><FontColorIcon /></IconButton>
              <IconButton $w={8} aria-label="Font colors"><Caret /></IconButton>
            </ToolRow>
          </Stack>
        </GroupBody>
        <GroupLabel $launcher>Font</GroupLabel>
        <Launcher aria-label="Font options"><LauncherIcon /></Launcher>
      </Group>

      <Group $w={341}>
        <GroupBody $pad="12px 0 0 5px">
          <Stack $gap={12}>
            <ToolRow>
              <IconButton $w={31} aria-label="Top align"><VLines top={3} /></IconButton>
              <IconButton $w={31} aria-label="Middle align"><VLines top={8} /></IconButton>
              <Toggle $w={30} $h={30} aria-label="Bottom align"><VLines top={14} /></Toggle>
              <Divider $m={5} />
              <IconButton $w={28} aria-label="Orientation"><OrientIcon /></IconButton>
              <IconButton $w={10} aria-label="Orientations"><Caret /></IconButton>
            </ToolRow>
            <ToolRow>
              <IconButton $w={31} aria-label="Align left"><Lines rows={[full, [0, 18], full, [0, 18], full]} /></IconButton>
              <IconButton $w={31} aria-label="Center"><Lines rows={[full, [3, 16], full, [3, 16], full]} /></IconButton>
              <IconButton $w={30} aria-label="Align right"><Lines rows={[full, [4, 18], full, [4, 18], full]} /></IconButton>
              <Divider $m={5} />
              <IconButton $w={30} aria-label="Decrease indent"><IndentIcon /></IconButton>
              <IconButton $w={31} aria-label="Increase indent"><IndentIcon flip /></IconButton>
            </ToolRow>
          </Stack>
          <Stack $top={8}><Divider $h={66} $m={6} $color="#d6d9dd" /></Stack>
          <Stack $gap={11} $top={2}>
            <SmallButton><IconSlot $w={24}><WrapIcon /></IconSlot>Wrap Text</SmallButton>
            <SmallButton><IconSlot $w={24}><MergeIcon /></IconSlot>Merge &amp; Center <Caret /></SmallButton>
          </Stack>
        </GroupBody>
        <GroupLabel $launcher>Alignment</GroupLabel>
        <Launcher aria-label="Alignment options"><LauncherIcon /></Launcher>
      </Group>

      <Group $w={186}>
        <GroupBody $pad="13px 0 0 5px">
          <Stack $gap={12}>
            <ToolRow>
              <Combo $w={177}><ComboSelect aria-label="Number format"><option>Text</option></ComboSelect><Caret /></Combo>
            </ToolRow>
            <ToolRow>
              <IconButton $w={31}><Glyph $size={24}>$</Glyph></IconButton>
              <IconButton $w={10} aria-label="Currencies"><Caret /></IconButton>
              <IconButton $w={38} aria-label="Percent style"><Percent>%</Percent></IconButton>
              <IconButton $w={26} aria-label="Comma style"><CommaIcon /></IconButton>
              <Divider $m={6} />
              <IconButton $w={30} aria-label="Increase decimal"><DecimalIcon /></IconButton>
              <IconButton $w={30} aria-label="Decrease decimal"><DecimalIcon right /></IconButton>
            </ToolRow>
          </Stack>
        </GroupBody>
        <GroupLabel $launcher>Number</GroupLabel>
        <Launcher aria-label="Number options"><LauncherIcon /></Launcher>
      </Group>

      <Group $w={232}>
        <GroupBody $pad="0 0 0 4px">
          <BigButton $w={93}><BigIcon><CondIcon /></BigIcon><LabelLine>Conditional</LabelLine><LabelLine>Formatting <Caret /></LabelLine></BigButton>
          <BigButton $w={73}><BigIcon><TableIcon /></BigIcon><LabelLine>Format</LabelLine><LabelLine>as Table <Caret /></LabelLine></BigButton>
          <BigButton $w={57}><BigIcon><CellStyleIcon /></BigIcon><LabelLine>Cell</LabelLine><LabelLine>Styles <Caret /></LabelLine></BigButton>
        </GroupBody>
        <GroupLabel>Styles</GroupLabel>
      </Group>

      <Group $w={183}>
        <GroupBody $pad="0 0 0 4px">
          <BigButton $w={58}><BigIcon><InsertIcon /></BigIcon><LabelLine>Insert</LabelLine><LabelLine><Caret /></LabelLine></BigButton>
          <BigButton $w={58}><BigIcon><DeleteIcon /></BigIcon><LabelLine>Delete</LabelLine><LabelLine><Caret /></LabelLine></BigButton>
          <BigButton $w={58}><BigIcon><FormatIcon /></BigIcon><LabelLine>Format</LabelLine><LabelLine><Caret /></LabelLine></BigButton>
        </GroupBody>
        <GroupLabel>Cells</GroupLabel>
      </Group>

      <Group $w={236}>
        <GroupBody $pad="0 0 0 9px">
          <Stack $top={2}>
            <SmallButton $h={30}><IconSlot $w={22}><SigmaIcon /></IconSlot>AutoSum <Caret /></SmallButton>
            <SmallButton $h={30}><IconSlot $w={22}><FillDownIcon /></IconSlot>Fill <Caret /></SmallButton>
            <SmallButton $h={30}><IconSlot $w={22}><EraserIcon /></IconSlot>Clear <Caret /></SmallButton>
          </Stack>
          <Spacer />
          <BigButton $w={58}><BigIcon><SortIcon /></BigIcon><LabelLine>Sort &amp;</LabelLine><LabelLine>Filter <Caret /></LabelLine></BigButton>
          <BigButton $w={62}><BigIcon><FindIcon /></BigIcon><LabelLine>Find &amp;</LabelLine><LabelLine>Select <Caret /></LabelLine></BigButton>
        </GroupBody>
        <GroupLabel>Editing</GroupLabel>
      </Group>
    </Ribbon>
  );
}

export default function App() {
  return (
    <Window>
      <Global />
      <TitleBar>
        <QuickAccess>
          <IconButton $w={26} aria-label="Excel"><ExcelIcon /></IconButton>
          <Divider $m={3} $color="#8f9399" />
          <IconButton $w={28} aria-label="Save"><SaveIcon /></IconButton>
          <IconButton $w={32} aria-label="Undo"><Undo /></IconButton>
          <IconButton $w={10} aria-label="Undo history"><Caret c="#a7aaaf" w={6} /></IconButton>
          <IconButton $w={36} aria-label="Redo"><Undo flip /></IconButton>
          <IconButton $w={6} aria-label="Redo history"><Caret c="#a7aaaf" w={6} /></IconButton>
          <Divider $m={7} $color="#8f9399" />
          <IconButton $w={10} aria-label="Customize toolbar"><QatMore /></IconButton>
        </QuickAccess>
        <Title>{"EmpowHR_JobCode_Mass_Action_Template_v8.0  [Read-Only]  [Compatibility Mode]  -  Microsoft Excel"}</Title>
        <WindowButtons $gap={28} $pad={13}>
          <IconButton aria-label="Minimize"><MinIcon w={23} /></IconButton>
          <IconButton aria-label="Restore"><RestoreIcon /></IconButton>
          <IconButton aria-label="Close"><CloseIcon /></IconButton>
        </WindowButtons>
      </TitleBar>
      <TabStrip>
        <FileTab>File</FileTab>
        {["Home", "Insert", "Page Layout", "Formulas", "Data", "Review", "View"].map((t) => (
          <RibbonTab key={t} $active={t === "Home"}>{t}</RibbonTab>
        ))}
        <Spacer />
        <WindowButtons $gap={11} $pad={4} $h={36}>
          <IconButton aria-label="Minimize ribbon"><RibbonChevron /></IconButton>
          <IconButton aria-label="Help"><HelpIcon /></IconButton>
          <IconButton aria-label="Minimize workbook"><SmallMinIcon /></IconButton>
          <IconButton aria-label="Restore workbook"><RestoreIcon size={18} s={2.400} /></IconButton>
          <IconButton aria-label="Close workbook"><CloseIcon w={18} s={2.400} /></IconButton>
        </WindowButtons>
      </TabStrip>
      <RibbonPanel />
      <SecurityBar>
        <ShieldIcon />
        <Warn>Security Warning</Warn>
        <span>Macros have been disabled.</span>
        <EnableButton>Enable Content</EnableButton>
        <Spacer />
        <IconButton aria-label="Dismiss"><SmallX /></IconButton>
      </SecurityBar>
      <FormulaBar>
        <NameBox aria-label="Name box" defaultValue="E12" />
        <IconButton $w={25} aria-label="Named ranges"><Tri w={12} h={6} d="M0 0h12L6 6z" /></IconButton>
        <FxArea><Dot /><Glyph $style="italic" $size={20}>fx</Glyph></FxArea>
        <FormulaInput aria-label="Formula" />
        <ExpandButton $w={25} aria-label="Expand formula bar"><Tri w={12} h={9} d="M0 0h3l3 3 3-3h3v3L6 9 0 3z" /></ExpandButton>
      </FormulaBar>
      <Main>
        <Sheet />
        <VScroll>
          <IconButton $h={26} aria-label="Scroll up"><Tri d="M0 9h15L7.500 1z" /></IconButton>
          <VThumb><svg width="8" height="8" viewBox="0 0 8 8"><path d="M0 .5h8M0 2.500h8M0 4.500h8M0 6.500h8" stroke="#8d9299" /></svg></VThumb>
          <IconButton $h={26} aria-label="Scroll down"><Tri d="M0 0h15L7.500 8z" /></IconButton>
        </VScroll>
      </Main>
      <SheetBar>
        <NavButtons>
          <IconButton $w={23} aria-label="First sheet"><Tri w={9} h={11} d="M0 0h1.500v11H0zM8.500 0v11L2.500 5.500z" /></IconButton>
          <IconButton $w={24} aria-label="Previous sheet"><Tri w={7} h={11} d="M7 0v11L0 5.500z" /></IconButton>
          <IconButton $w={23} aria-label="Next sheet"><Tri w={7} h={11} d="M0 0v11l7-5.500z" /></IconButton>
          <IconButton $w={24} aria-label="Last sheet"><Tri w={9} h={11} d="M7.500 0H9v11H7.500zM.5 0v11l6-5.500z" /></IconButton>
        </NavButtons>
        <SheetTab $w={120} $pl={16}>Coversheet</SheetTab>
        <TabEdge />
        <SheetTab $w={202} $pl={9}>Connect Information</SheetTab>
        <SheetTab $w={102} $pl={9} $active>Template</SheetTab>
        <TabEdge left="#fff" />
        <SheetTab $w={102} $pl={2}>Data Input</SheetTab>
        <TabEdge />
        <SheetTab $w={211} $pl={10}>Staging &amp; Submission</SheetTab>
        <TabEdge />
        <SheetTab $w={148} $pl={5}>Required Fields</SheetTab>
        <TabEdge />
        <SheetTab $w={158} $pl={6}>Translate Values</SheetTab>
        <TabEdge />
        <NewSheetTab aria-label="Insert worksheet"><NewSheetIcon /></NewSheetTab>
        <TabEdge right="#d8dce0" />
        <Spacer />
        <HScroll>
          <SplitHandle />
          <IconButton $w={22} aria-label="Scroll left"><Tri w={9} h={17} d="M9 0v17L0 8.500z" /></IconButton>
          <HThumb><svg width="8" height="7" viewBox="0 0 8 7"><path d="M.5 0v7M2.500 0v7M4.500 0v7M6.500 0v7" stroke="#8d9299" /></svg></HThumb>
          <IconButton $w={24} aria-label="Scroll right"><Tri w={9} h={17} d="M0 0v17l9-8.500z" /></IconButton>
        </HScroll>
        <ScrollCorner />
      </SheetBar>
      <StatusBar>
        Ready
        <Divider $h={28} $m={9} $color="#8f9399" />
        <Spacer />
        <Divider $h={28} $m={4} $color="#8f9399" />
        <ViewToggle $w={28} $h={28} aria-label="Normal view"><GridViewIcon /></ViewToggle>
        <IconButton $w={22} aria-label="Page layout view"><PageViewIcon /></IconButton>
        <IconButton $w={34} aria-label="Page break preview"><BreakViewIcon /></IconButton>
        <ZoomLabel htmlFor="zoom">100%</ZoomLabel>
        <IconButton aria-label="Zoom out"><ZoomKnob /></IconButton>
        <ZoomRange id="zoom" type="range" min="0" max="200" defaultValue="100" />
        <IconButton aria-label="Zoom in"><ZoomKnob plus /></IconButton>
      </StatusBar>
    </Window>
  );
}
